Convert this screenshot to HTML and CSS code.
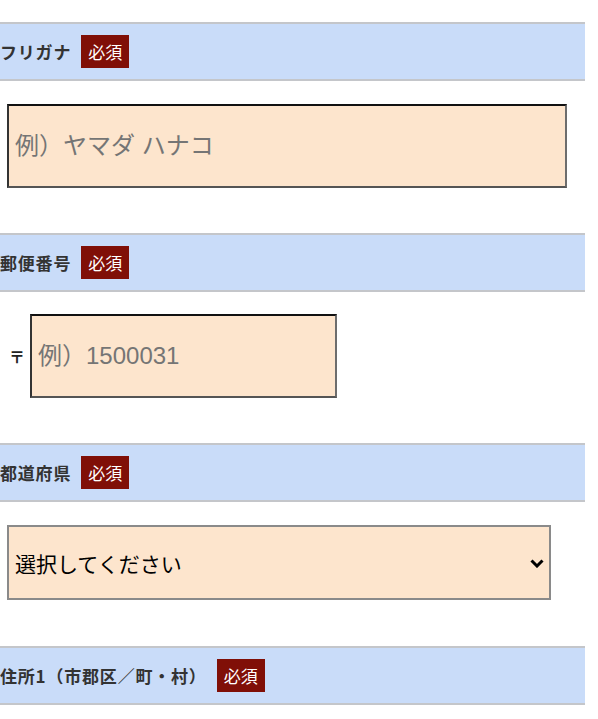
FILE: index.html
```html
<!DOCTYPE html>
<html lang="ja">
<head>
    <meta charset="UTF-8">
    <meta name="viewport" content="width=device-width, initial-scale=1.0">
    <title>お届け先入力</title>
    <link rel="stylesheet" href="styles.css">
</head>
<body>

<form class="entry-form">
    <div class="field">
        <div class="field-head">
            <span class="field-label">フリガナ</span>
            <span class="required">必須</span>
        </div>
        <div class="field-body">
            <input type="text" class="text-input wide" placeholder="例）ヤマダ ハナコ">
        </div>
    </div>

    <div class="field">
        <div class="field-head">
            <span class="field-label">郵便番号</span>
            <span class="required">必須</span>
        </div>
        <div class="field-body zip-row">
            <span class="zip-mark">〒</span>
            <input type="text" class="text-input zip" placeholder="例）1500031">
        </div>
    </div>

    <div class="field">
        <div class="field-head">
            <span class="field-label">都道府県</span>
            <span class="required">必須</span>
        </div>
        <div class="field-body select-body">
            <div class="select-wrap">
                <select class="pref-select">
                    <option value="">選択してください</option>
                    <option>北海道</option>
                    <option>東京都</option>
                    <option>大阪府</option>
                </select>
                <svg class="chevron" width="14" height="9" viewBox="0 0 14 9">
                    <path d="M1.5 1.5 L7 7 L12.5 1.5" fill="none" stroke="#000" stroke-width="3"/>
                </svg>
            </div>
        </div>
    </div>

    <div class="field">
        <div class="field-head">
            <span class="field-label">住所1（市郡区／町・村）</span>
            <span class="required">必須</span>
        </div>
    </div>
</form>

</body>
</html>
```

FILE: styles.css
```css
body {
    margin: 0;
    padding: 0;
    background: #fff;
    font-family: "Liberation Sans", "Noto Sans CJK JP", sans-serif;
    overflow: hidden;
}
.entry-form {
    width: 585px;
    padding-top: 22px;
}
.field-head {
    display: flex;
    align-items: center;
    height: 55px;
    background-color: #c9dcf9;
    border-top: 2px solid #c4c6ca;
    border-bottom: 2px solid #c4c6ca;
}
.field-label {
    font-family: "Noto Sans CJK JP", sans-serif;
    font-size: 17px;
    font-weight: bold;
    letter-spacing: 0.8px;
    color: #333;
}
.required {
    display: flex;
    align-items: center;
    justify-content: center;
    width: 48px;
    height: 33px;
    margin-left: 10px;
    background-color: #800f07;
    color: #fff;
    font-family: "Noto Sans CJK JP", sans-serif;
    font-size: 17px;
}
.field-body {
    padding: 23px 0 45px 7px;
}
.text-input {
    box-sizing: border-box;
    height: 84px;
    padding: 0 6px;
    border: 2px solid;
    border-color: #111 #6d6d6d #555 #333;
    background-color: #fde5cd;
    font-family: "Liberation Sans", "Noto Sans CJK JP", sans-serif;
    font-size: 24px;
    color: #333;
    outline: none;
}
.text-input::placeholder {
    color: #757575;
}
.wide {
    width: 560px;
}
.zip-row {
    display: flex;
    align-items: center;
    padding-top: 22px;
}
.zip-mark {
    margin-left: 2px;
    margin-right: 5px;
    font-family: "Noto Sans CJK JP", sans-serif;
    font-size: 16px;
    font-weight: bold;
    color: #222;
}
.zip {
    width: 307px;
}
.select-body {
    padding-bottom: 46px;
}
.select-wrap {
    position: relative;
    width: 544px;
}
.pref-select {
    box-sizing: border-box;
    width: 544px;
    height: 75px;
    padding: 0 6px;
    appearance: none;
    -webkit-appearance: none;
    border: 2px solid #8a8a8a;
    border-radius: 0;
    background-color: #fde5cd;
    font-family: "Noto Sans CJK JP", sans-serif;
    font-size: 21px;
    color: #000;
    outline: none;
}
.chevron {
    position: absolute; /* drawn over the select */
    right: 7px;
    top: 34px;
}
```
